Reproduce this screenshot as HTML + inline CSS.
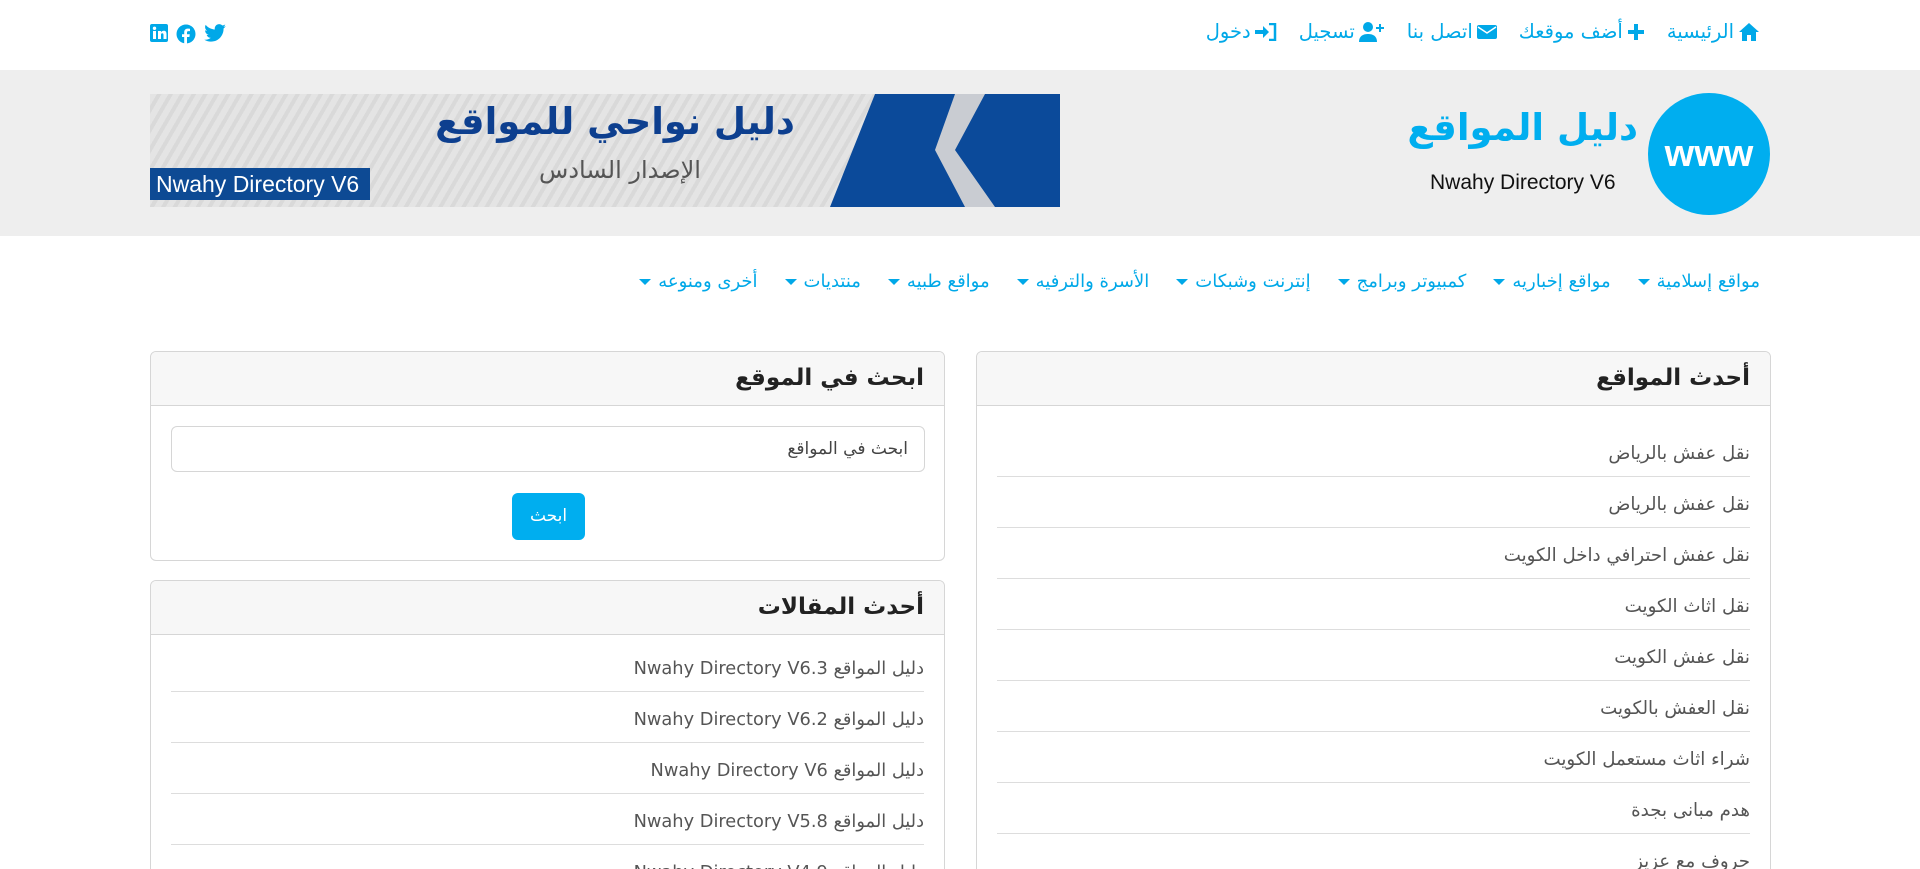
<!DOCTYPE html>
<html lang="ar" dir="rtl">
<head>
<meta charset="utf-8">
<style>
*{box-sizing:border-box;margin:0;padding:0}
html,body{width:1920px;height:869px;overflow:hidden;background:#fff}
body{font-family:"DejaVu Sans","Liberation Sans",sans-serif}
#w{position:relative;width:1920px;height:869px;overflow:hidden}
.a{position:absolute}
.topnav{right:160px;top:20px;display:flex;gap:22px;font-size:19.5px;color:#00a8e8;direction:rtl;align-items:center;white-space:nowrap}
.topnav span{display:flex;align-items:center;gap:4px}
.hdr{top:70px;left:0;width:1920px;height:166px;background:#eee}
.menu{right:160px;top:271px;display:flex;gap:27px;font-size:18px;color:#00a8e8;direction:rtl;white-space:nowrap}
.menu span:after{content:"";display:inline-block;border-top:6px solid #00a8e8;border-left:6px solid transparent;border-right:6px solid transparent;margin-right:7px;vertical-align:middle}
.card{border:1px solid #d6d6d6;border-radius:6px;background:#fff;overflow:hidden}
.ch{background:#f7f7f7;border-bottom:1px solid #d6d6d6;height:54px;padding:0 20px;font-size:23px;font-weight:bold;color:#222;line-height:52px}
.li{margin:0 20px;border-bottom:1px solid #ddd;height:51px;line-height:55px;font-size:18.2px;color:#555;white-space:nowrap}
.sm .li{font-size:17.8px}
</style>
</head>
<body>
<div id="w">
<div class="a topnav">
<span><svg width="22" height="20" viewBox="0 0 22 20"><path d="M11 1L1 10h3v9h5v-6h4v6h5v-9h3z" fill="#00a8e8"/></svg>الرئيسية</span>
<span><svg width="18" height="18" viewBox="0 0 18 18"><path d="M7 1h4v6h6v4h-6v6H7v-6H1V7h6z" fill="#00a8e8"/></svg>أضف موقعك</span>
<span><svg width="20" height="16" viewBox="0 0 20 16"><rect x="0" y="1" width="20" height="14" rx="2" fill="#00a8e8"/><path d="M1 3l9 6 9-6" stroke="#fff" stroke-width="1.5" fill="none"/></svg>اتصل بنا</span>
<span><svg width="26" height="20" viewBox="0 0 26 20"><circle cx="9" cy="5" r="5" fill="#00a8e8"/><path d="M0 20c0-6 4-8 9-8s9 2 9 8z" fill="#00a8e8"/><path d="M20 2h2v3h3v2h-3v3h-2V7h-3V5h3z" fill="#00a8e8"/></svg>تسجيل</span>
<span><svg width="22" height="18" viewBox="0 0 22 18"><path d="M0 7h8V3l6 6-6 6v-4H0z" fill="#00a8e8"/><path d="M14 1h6v16h-6" stroke="#00a8e8" stroke-width="2.5" fill="none"/></svg>دخول</span>
</div>
<div class="a" style="left:150px;top:24px;display:flex;gap:8px;direction:ltr">
<svg width="18" height="18" viewBox="0 0 18 18"><rect width="18" height="18" rx="2" fill="#00a8e8"/><rect x="3" y="7" width="3" height="8" fill="#fff"/><circle cx="4.5" cy="4.3" r="1.7" fill="#fff"/><path d="M8 7h3v1.3c.6-1 1.6-1.5 2.8-1.5 2 0 2.7 1.3 2.7 3.5V15h-3v-4c0-1-.3-1.8-1.3-1.8S11 10 11 11v4H8z" fill="#fff"/></svg>
<svg width="20" height="20" viewBox="0 0 20 20"><circle cx="10" cy="10" r="9.5" fill="#00a8e8"/><path d="M11 20v-7h2.4l.4-2.8H11V8.5c0-.8.3-1.4 1.4-1.4H14V4.7c-.3 0-1.2-.1-2.2-.1-2.2 0-3.6 1.3-3.6 3.7v1.9H6V13h2.2v7z" fill="#fff"/></svg>
<svg width="22" height="18" viewBox="0 0 24 20"><path d="M24 2.4c-.9.4-1.8.7-2.8.8 1-.6 1.8-1.6 2.2-2.7-1 .6-2 1-3.1 1.2C19.3.7 18 .1 16.6.1c-2.7 0-4.9 2.2-4.9 4.9 0 .4 0 .8.1 1.1C7.7 5.9 4.1 4 1.7 1 1.2 1.8 1 2.6 1 3.5c0 1.7.9 3.2 2.2 4.1-.8 0-1.6-.2-2.2-.6v.1c0 2.4 1.7 4.4 3.9 4.8-.4.1-.8.2-1.3.2-.3 0-.6 0-.9-.1.6 2 2.4 3.4 4.6 3.4-1.7 1.3-3.8 2.1-6.1 2.1-.4 0-.8 0-1.2-.1 2.2 1.4 4.8 2.2 7.5 2.2 9.1 0 14-7.5 14-14v-.6c1-.7 1.8-1.6 2.5-2.6z" fill="#00a8e8"/></svg>
</div>
<div class="a hdr"></div>
<div class="a" style="left:1648px;top:93px;width:122px;height:122px;border-radius:50%;background:#00aeef;color:#fff;font:bold 38px 'Liberation Sans',sans-serif;text-align:center;line-height:122px">www</div>
<div class="a" style="right:282px;top:106px;font-size:37px;font-weight:bold;color:#00aeef;direction:rtl;white-space:nowrap">دليل المواقع</div>
<div class="a" style="left:1430px;top:171px;font:21px 'Liberation Sans',sans-serif;color:#111">Nwahy Directory V6</div>
<div class="a" style="left:150px;top:94px;width:910px;height:113px;background:repeating-linear-gradient(120deg,#e4e4e4 0 6px,#d9d9d9 6px 10px);overflow:hidden">
<div class="a" style="left:680px;top:0;width:240px;height:113px;background:#0b4a9a;clip-path:polygon(45px 0,240px 0,240px 113px,0 113px)"></div>
<div class="a" style="left:785px;top:0;width:60px;height:113px;background:#c9ccd2;clip-path:polygon(20px 0,50px 0,20px 56px,60px 113px,30px 113px,0 56px)"></div>
<div class="a" style="left:255px;top:6px;width:420px;text-align:center;font-size:37px;font-weight:bold;color:#0d3f8f;direction:rtl;white-space:nowrap">دليل نواحي للمواقع</div>
<div class="a" style="left:320px;top:62px;width:300px;text-align:center;font-size:24px;color:#555;direction:rtl;white-space:nowrap">الإصدار السادس</div>
<div class="a" style="left:0;top:74px;width:220px;height:32px;background:#0d4a94;color:#fff;font:23px 'Liberation Sans',sans-serif;line-height:32px;padding-left:6px;direction:ltr;text-align:left">Nwahy Directory V6</div>
</div>
<div class="a menu">
<span>مواقع إسلامية</span><span>مواقع إخباريه</span><span>كمبيوتر وبرامج</span><span>إنترنت وشبكات</span><span>الأسرة والترفيه</span><span>مواقع طبيه</span><span>منتديات</span><span>أخرى ومنوعه</span>
</div>
<div class="a card" style="left:976px;top:351px;width:795px;height:560px">
<div class="ch">أحدث المواقع</div>
<div style="height:20px"></div>
<div class="li">نقل عفش بالرياض</div>
<div class="li">نقل عفش بالرياض</div>
<div class="li">نقل عفش احترافي داخل الكويت</div>
<div class="li">نقل اثاث الكويت</div>
<div class="li">نقل عفش الكويت</div>
<div class="li">نقل العفش بالكويت</div>
<div class="li">شراء اثاث مستعمل الكويت</div>
<div class="li">هدم مبانى بجدة</div>
<div class="li">حروف مع عزيز</div>
</div>
<div class="a card" style="left:150px;top:351px;width:795px;height:210px">
<div class="ch">ابحث في الموقع</div>
<div class="a" style="left:20px;top:74px;width:754px;height:46px;border:1px solid #d6d6d6;border-radius:6px;padding:0 16px;line-height:44px;font-size:17px;color:#444">ابحث في المواقع</div>
<div class="a" style="left:361px;top:141px;width:73px;height:47px;background:#00aeef;border-radius:6px;color:#fff;text-align:center;line-height:47px;font-size:17px">ابحث</div>
</div>
<div class="a card sm" style="left:150px;top:580px;width:795px;height:330px">
<div class="ch">أحدث المقالات</div>
<div style="height:6px"></div>
<div class="li">دليل المواقع Nwahy Directory V6.3</div>
<div class="li">دليل المواقع Nwahy Directory V6.2</div>
<div class="li">دليل المواقع Nwahy Directory V6</div>
<div class="li">دليل المواقع Nwahy Directory V5.8</div>
<div class="li">دليل المواقع Nwahy Directory V4.9</div>
</div>
</div>
</body>
</html>
